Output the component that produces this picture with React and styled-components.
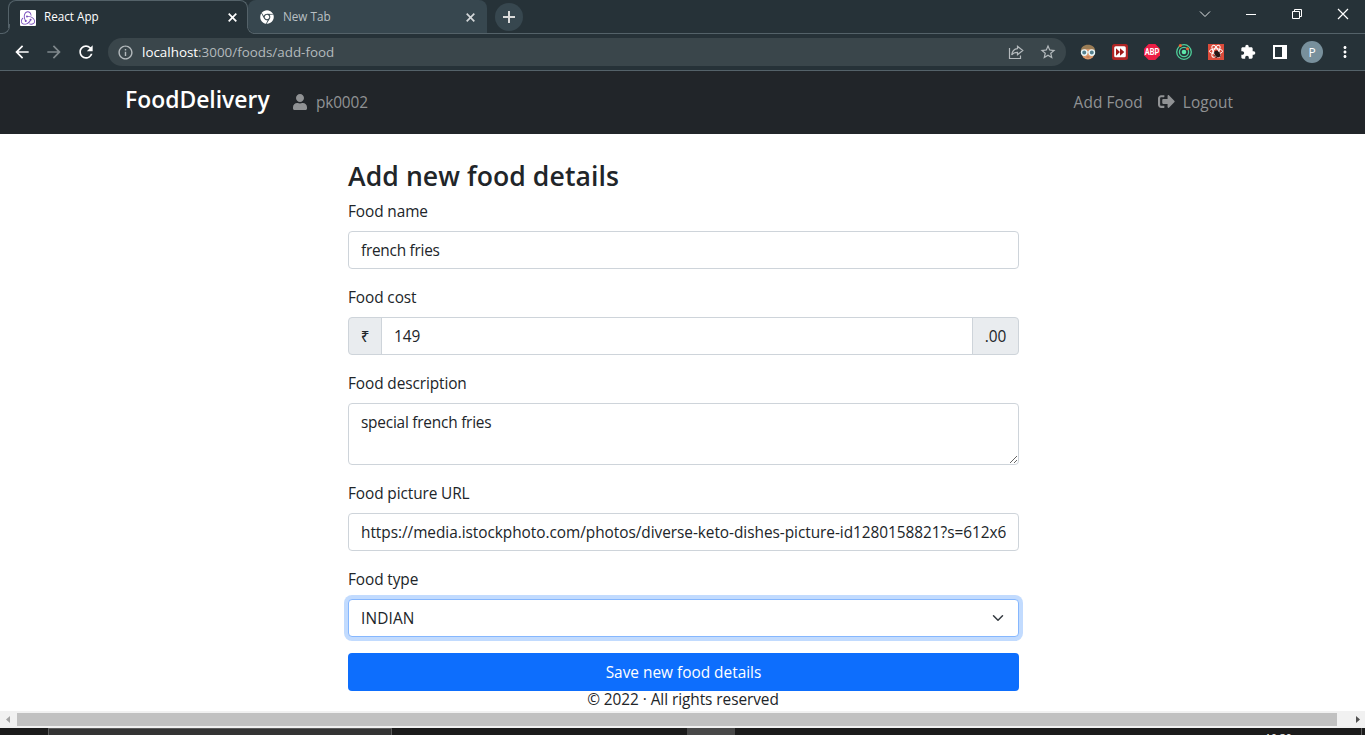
import React from 'react';
import styled, { createGlobalStyle, css } from 'styled-components';
import { MdArrowBack, MdArrowForward, MdRefresh, MdInfoOutline, MdStarBorder, MdExtension, MdMoreVert } from 'react-icons/md';
import { FaUser, FaSignOutAlt, FaChrome } from 'react-icons/fa';
import { SiRedux } from 'react-icons/si';

const GlobalStyle = createGlobalStyle`
  * { box-sizing: border-box; }
  html, body { margin: 0; padding: 0; background: #fff; overflow: hidden; }
  body, input, textarea, button { font-family: "Open Sans", "Noto Sans", sans-serif; }
`;

const Screen = styled.div`
  width: 1365px;
  height: 735px;
  display: flex;
  flex-direction: column;
  overflow: hidden;
`;

const TabStrip = styled.header`
  height: 34px;
  flex: none;
  display: flex;
  background: #263238;
  box-shadow: inset 0 -1px 0 #546269;
  padding-left: 8px;
`;

const Tab = styled.div`
  position: relative;
  width: 240px;
  height: 34px;
  display: flex;
  align-items: center;
  padding: 0 10px 0 12px;
  font-size: 11.7px;
  color: ${(p) => (p.$active ? '#fff' : '#b9c0c3')};
  ${(p) => p.$active ? css`
    background: #263238;
    border: 1px solid #546269;
    border-bottom: 0;
    border-radius: 8px 8px 0 0;
    padding-left: 11px;
    &::before {
      content: '';
      position: absolute;
      left: -6px;
      right: -6px;
      bottom: 0;
      height: 6px;
      background: #263238;
    }
    &::after {
      content: '';
      position: absolute;
      left: -9px;
      bottom: 0;
      width: 9px;
      height: 9px;
      border: solid #546269;
      border-width: 0 1px 1px 0;
      border-radius: 0 0 8px 0;
    }
  ` : css`
    width: 239px;
    height: 33px;
    padding: 1px 12px 0 11px;
    background: #37474f;
    border-radius: 8px 8px 0 8px;
    &::before {
      content: '';
      position: absolute;
      left: -1px;
      bottom: -1px;
      width: 9px;
      height: 9px;
      border: solid #546269;
      border-width: 0 0 1px 1px;
      border-radius: 0 0 0 8px;
    }
  `}
`;

const TabTitle = styled.span`
  flex: 1;
  margin: ${(p) => p.$top || -2}px 0 0 8px;
  line-height: 16px;
`;

const Favicon = styled.span`
  width: 16px;
  height: 16px;
  display: grid;
  place-items: center;
  border-radius: 1px;
  background: ${(p) => p.$bg || 'transparent'};
  color: ${(p) => p.$color};
`;

const NewTab = styled.button`
  width: 28px;
  height: 28px;
  margin: 3px 0 0 8px;
  padding: 0;
  border: 0;
  border-radius: 50%;
  background: #37474f;
  display: grid;
  place-items: center;
`;

const WindowControls = styled.div`
  margin: 0 -1px 0 auto;
  display: flex;
  height: 28px;
  svg { display: block; width: 46px; height: 28px; }
`;

const Toolbar = styled.div`
  height: 37px;
  flex: none;
  display: flex;
  align-items: center;
  background: #263238;
  border-bottom: 1px solid #546269;
  padding: 0 11px 0 12px;
  color: #fff;
  svg { display: block; flex: none; }
`;

const NavButtons = styled.div`
  display: flex;
  gap: 12px;
  width: 96px;
`;

const AddressBar = styled.div`
  width: 958px;
  height: 28px;
  border-radius: 14px;
  background: #3a464b;
  display: flex;
  align-items: center;
  padding: 0 9px 0 9px;
  font-size: 13.4px;
  color: #b4babd;
`;

const Url = styled.span`
  flex: 1;
  margin-left: 8px;
  b { font-weight: 400; color: #fff; }
`;

const AddressActions = styled.div`
  display: flex;
  gap: 14px;
`;

const Extensions = styled.div`
  display: flex;
  align-items: center;
  margin-left: 14px;
  gap: 16px;
`;

const Avatar = styled.span`
  width: 22px;
  height: 22px;
  margin: 0 -3px;
  border-radius: 50%;
  display: grid;
  place-items: center;
  background: #78909c;
  font-size: 12px;
`;

const Navbar = styled.nav`
  height: 63px;
  flex: none;
  display: flex;
  align-items: center;
  padding: 0 132px 0 125px;
  background: #212529;
  color: #909294;
`;

const Brand = styled.a`
  color: #fff;
  font-size: 22.9px;
  font-weight: 600;
  line-height: 30px;
  margin-top: -5px;
  width: 167px;
`;

const NavItem = styled.a`
  display: flex;
  align-items: center;
  gap: 8px;
  margin: 0 0 0 ${(p) => p.$left || '0'};
  font-size: 15.4px;
  line-height: 24px;
  letter-spacing: ${(p) => p.$track || 0}px;
  svg { margin-top: -2px; }
`;

const Page = styled.main`
  height: 577px;
  flex: none;
  background: #fff;
  padding-top: 25px;
  color: #212529;
`;

const Form = styled.form`
  width: 671px;
  margin-left: 348px;
`;

const Title = styled.h3`
  margin: 0 0 6px;
  font-size: 26.6px;
  font-weight: 600;
  line-height: 34px;
  letter-spacing: 0.07px;
`;

const Field = styled.div`
  margin-bottom: 16px;
`;

const Label = styled.label`
  display: block;
  width: fit-content;
  margin-bottom: 6px;
  font-size: 15.4px;
  line-height: 26px;
  letter-spacing: -0.1px;
`;

const control = css`
  display: block;
  width: 100%;
  height: 38px;
  margin: 0;
  padding: 6px 12px;
  border: 1px solid #ced4da;
  border-radius: 4px;
  background: #fff;
  color: #212529;
  font-size: 15.4px;
  line-height: 24px;
  outline: none;
  letter-spacing: ${(p) => p.$track || 0}px;
`;

const Input = styled.input`${control}`;

const TextArea = styled.textarea`
  ${control}
  height: 62px;
  padding-top: 7px;
  overflow: hidden;
  resize: vertical;
`;

const Group = styled.div`
  display: flex;
  ${Input} {
    flex: 1;
    min-width: 0;
    border-radius: 0;
    margin: 0 -1px;
  }
`;

const Addon = styled.span`
  width: ${(p) => p.$width}px;
  display: grid;
  place-items: center;
  border: 1px solid #ced4da;
  border-radius: ${(p) => (p.$end ? '0 4px 4px 0' : '4px 0 0 4px')};
  background: #e9ecef;
  font-size: 15.4px;
  letter-spacing: -0.1px;
`;

const Select = styled.div`
  ${control}
  display: flex;
  justify-content: space-between;
  align-items: center;
  line-height: 26px;
  padding: 6px 12px 4px;
  border-color: #86b7fe;
  box-shadow: 0 0 0 4px rgba(13, 110, 253, 0.25);
  svg { margin-top: -2px; }
`;

const SaveButton = styled.button`
  display: block;
  width: 100%;
  height: 38px;
  padding: 0;
  border: 0;
  border-radius: 4px;
  background: #0d6efd;
  color: #fff;
  font-size: 15.4px;
`;

const Footer = styled.footer`
  padding-left: 1px;
  text-align: center;
  font-size: 15.4px;
  line-height: 18px;
  letter-spacing: -0.06px;
`;

const ScrollBar = styled.div`
  height: 17px;
  flex: none;
  display: flex;
  align-items: center;
  background: #f1f1f1;
  svg { display: block; flex: none; }
`;

const Thumb = styled.div`
  width: 1320px;
  height: 13px;
  background: #c1c1c1;
`;

const Taskbar = styled.div`
  height: 7px;
  flex: none;
  display: flex;
  background: #1b1b1b;
  overflow: hidden;
`;

const SearchBox = styled.div`
  width: 344px;
  margin-left: 48px;
  height: 40px;
  background: #333;
  border: 1px solid #5c5c5c;
`;

const ActiveApp = styled.div`
  width: 48px;
  margin-left: 295px;
  background: #484848;
`;

const Clock = styled.div`
  margin: 5px 0 0 530px;
  width: 96px;
  color: #fff;
  font-size: 10.5px;
  line-height: 10px;
`;

const DesktopEdge = styled.div`
  width: 1px;
  background: #5c5c5c;
`;

const CloseX = ({ color }) => (
  <svg width="9" height="9" viewBox="0 0 9 9" stroke={color} strokeWidth="1.7"><path d="M.7.7l7.6 7.6M8.3.7L.7 8.3" /></svg>
);

const ShareIcon = () => (
  <svg width="18" height="18" viewBox="0 0 18 18" fill="none" stroke="#b4babd" strokeWidth="1.2">
    <path d="M2.500 5v10.500h11v-3M4.700 12c.5-4 2.500-6 5.800-6.300V3.200l5.300 4.300-5.300 4.300V9.300C8 9.300 6 10 4.700 12z" />
  </svg>
);

const FaceIcon = () => (
  <svg width="16" height="16" viewBox="0 0 16 16">
    <ellipse cx="8" cy="8.500" rx="6.600" ry="7" fill="#d9986b" />
    <path d="M.8 7.500C.8 3 4 .8 8 .8s7.200 2.200 7.200 6.700L12 5H5z" fill="#9a7d56" />
    <path d="M6 7.500h4v1H6z" fill="#dff1f5" />
    <circle cx="4.200" cy="8.600" r="2.700" fill="#54808e" stroke="#e9f7fa" strokeWidth="1.400" />
    <circle cx="11.800" cy="8.600" r="2.700" fill="#54808e" stroke="#e9f7fa" strokeWidth="1.400" />
    <path d="M6.500 13h3" stroke="#b06a4a" />
  </svg>
);

const ForwardIcon = () => (
  <svg width="16" height="16" viewBox="0 0 16 16">
    <rect width="16" height="16" rx="2.500" fill="#b02524" />
    <rect x="2.200" y="2.200" width="11.600" height="11" rx="1.500" fill="#fff" />
    <path d="M4 4.300l4 3.700-4 3.700zM8 4.300L12.300 8 8 11.700z" fill="#a01818" />
  </svg>
);

const AbpIcon = () => (
  <svg width="16" height="16" viewBox="0 0 16 16">
    <path d="M4.700 0h6.600L16 4.700v6.600L11.300 16H4.700L0 11.300V4.700z" fill="#ed1e45" />
    <text x="8" y="10.900" textAnchor="middle" fill="#fff" fontFamily="Roboto, sans-serif" fontWeight="700" fontSize="8.200" textLength="14.600" lengthAdjust="spacingAndGlyphs">ABP</text>
  </svg>
);

const OrbitIcon = () => (
  <svg width="16" height="16" viewBox="0 0 16 16" fill="none" stroke="#4fd09a" strokeWidth="1.300">
    <circle cx="8" cy="8" r="7.300" />
    <circle cx="8" cy="8" r="4.600" />
    <circle cx="8" cy="8" r="2.300" fill="#5ee6ab" stroke="none" />
    <circle cx="4.300" cy="1.500" r="1.500" fill="#f0652f" stroke="none" />
    <circle cx="11.500" cy="4.700" r="1.500" fill="#f0652f" stroke="none" />
  </svg>
);

const ReactBugIcon = () => (
  <svg width="16" height="16" viewBox="0 0 16 16">
    <path d="M0 0h16v16H0z" fill="#dc4b3a" />
    <g fill="none" stroke="#fff" strokeWidth="1">
      <ellipse cx="8" cy="7.300" rx="6.600" ry="2.500" />
      <ellipse cx="8" cy="7.300" rx="6.600" ry="2.500" transform="rotate(60 8 7.300)" />
      <ellipse cx="8" cy="7.300" rx="6.600" ry="2.500" transform="rotate(120 8 7.300)" />
    </g>
    <ellipse cx="9.300" cy="10" rx="2.400" ry="3.600" fill="#251615" transform="rotate(-35 9.300 10)" />
    <path d="M6 9l6.500 2M6.500 11.500l5.500-3M9 13.500l-2.500-1M12.500 13l-2-2" stroke="#251615" strokeWidth=".8" />
  </svg>
);

const SidePanelIcon = () => (
  <svg width="16" height="16" viewBox="0 0 16 16"><path d="M1 1h14v14H1zM3 3v10h7V3z" fill="#fff" fillRule="evenodd" /></svg>
);

export default function App() {
  return (
    <Screen>
      <GlobalStyle />
      <TabStrip>
        <Tab $active>
          <Favicon $bg="#fff" $color="#764abc"><SiRedux size={14} /></Favicon>
          <TabTitle $top={-3}>React App</TabTitle>
          <CloseX color="#fff" />
        </Tab>
        <Tab>
          <Favicon $color="#fff"><FaChrome size={14} /></Favicon>
          <TabTitle>New Tab</TabTitle>
          <CloseX color="#d3d7d9" />
        </Tab>
        <NewTab type="button">
          <svg width="12" height="12" viewBox="0 0 12 12" stroke="#dadada" strokeWidth="2"><path d="M6 0v12M0 6h12" /></svg>
        </NewTab>
        <WindowControls>
          <svg viewBox="0 0 46 28" fill="none" stroke="#e0e3e4" strokeWidth="1"><path d="M18 11.500l5 5 5-5" /></svg>
          <svg viewBox="0 0 46 28" fill="none" stroke="#fff" strokeWidth="1"><path d="M18 14.500h10" /></svg>
          <svg viewBox="0 0 46 28" fill="none" stroke="#fff" strokeWidth="1"><path d="M18.500 11.500h7v7h-7zM20.500 11.500v-2h7v7h-2" /></svg>
          <svg viewBox="0 0 46 28" fill="none" stroke="#fff" strokeWidth="1.200"><path d="M18 9l10 10M28 9L18 19" /></svg>
        </WindowControls>
      </TabStrip>
      <Toolbar>
        <NavButtons>
          <MdArrowBack size={20} />
          <MdArrowForward size={20} color="#7f888c" />
          <MdRefresh size={20} />
        </NavButtons>
        <AddressBar>
          <MdInfoOutline size={17} />
          <Url><b>localhost</b>:3000/foods/add-food</Url>
          <AddressActions>
            <ShareIcon />
            <MdStarBorder size={18} />
          </AddressActions>
        </AddressBar>
        <Extensions>
          <FaceIcon />
          <ForwardIcon />
          <AbpIcon />
          <OrbitIcon />
          <ReactBugIcon />
          <MdExtension size={16} />
          <SidePanelIcon />
          <Avatar>P</Avatar>
          <MdMoreVert size={18} />
        </Extensions>
      </Toolbar>
      <Navbar>
        <Brand>FoodDelivery</Brand>
        <NavItem $track={-0.15}><FaUser size={16} />pk0002</NavItem>
        <NavItem $left="auto" $track={0.1}>Add Food</NavItem>
        <NavItem $left="15px" $track={0.05}><FaSignOutAlt size={17} />Logout</NavItem>
      </Navbar>
      <Page>
        <Form>
          <Title>Add new food details</Title>
          <Field>
            <Label>Food name</Label>
            <Input readOnly value="french fries" $track={-0.25} />
          </Field>
          <Field>
            <Label>Food cost</Label>
            <Group>
              <Addon $width={34}>₹</Addon>
              <Input readOnly value="149" />
              <Addon $width={47} $end>.00</Addon>
            </Group>
          </Field>
          <Field>
            <Label>Food description</Label>
            <TextArea readOnly value="special french fries" $track={-0.22} />
          </Field>
          <Field>
            <Label>Food picture URL</Label>
            <Input readOnly value="https://media.istockphoto.com/photos/diverse-keto-dishes-picture-id1280158821?s=612x612" $track={-0.045} />
          </Field>
          <Field>
            <Label>Food type</Label>
            <Select $track={0.15}>
              INDIAN
              <svg width="16" height="12" viewBox="0 0 16 16" fill="none" stroke="#343a40" strokeWidth="2" strokeLinecap="round" strokeLinejoin="round"><path d="M2 5l6 6 6-6" /></svg>
            </Select>
          </Field>
          <SaveButton type="button">Save new food details</SaveButton>
        </Form>
        <Footer>© 2022 · All rights reserved</Footer>
      </Page>
      <ScrollBar>
        <svg width="17" height="17" viewBox="0 0 17 17"><path d="M10 5v7L6 8.500z" fill="#a3a3a3" /></svg>
        <Thumb />
        <svg width="28" height="17" viewBox="0 0 28 17"><path d="M19 5v7l4-3.500z" fill="#505050" /></svg>
      </ScrollBar>
      <Taskbar>
        <SearchBox />
        <ActiveApp />
        <Clock>10:30</Clock>
        <DesktopEdge />
      </Taskbar>
    </Screen>
  );
}
